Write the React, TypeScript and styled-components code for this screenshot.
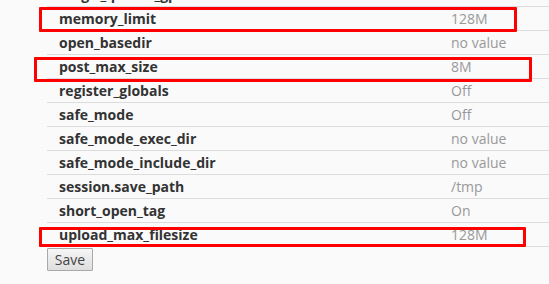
import React from "react";
import styled, { createGlobalStyle } from "styled-components";

const GlobalStyle = createGlobalStyle`
  html, body {
    margin: 0;
    padding: 0;
    background: #fafafa;
  }
  body {
    font-family: "Open Sans", "DejaVu Sans", sans-serif;
    font-size: 14px;
  }
`;

interface Setting {
  name: string;
  value: string;
}

const settings: Setting[] = [
  { name: "magic_quotes_gpc", value: "Off" },
  { name: "memory_limit", value: "128M" },
  { name: "open_basedir", value: "no value" },
  { name: "post_max_size", value: "8M" },
  { name: "register_globals", value: "Off" },
  { name: "safe_mode", value: "Off" },
  { name: "safe_mode_exec_dir", value: "no value" },
  { name: "safe_mode_include_dir", value: "no value" },
  { name: "session.save_path", value: "/tmp" },
  { name: "short_open_tag", value: "On" },
  { name: "upload_max_filesize", value: "128M" },
];

// red annotation boxes drawn over the screenshot
const marks = [
  { left: 39, top: 7, width: 478, height: 25 },
  { left: 34, top: 57, width: 498, height: 25 },
  { left: 39, top: 227, width: 487, height: 20 },
];

function App() {
  return (
    <Page>
      <GlobalStyle />
      <Settings>
        {settings.map((s) => (
          <Row key={s.name}>
            <Name>{s.name}</Name>
            <Value>{s.value}</Value>
          </Row>
        ))}
      </Settings>
      <SaveButton type="button">Save</SaveButton>
      {marks.map((m, i) => (
        <Mark key={i} style={m} />
      ))}
    </Page>
  );
}

const Page = styled.div`
  position: relative;
  width: 549px;
  height: 284px;
  overflow: hidden;
  padding-left: 47px;
  box-sizing: border-box;
`;

const Settings = styled.div`
  width: 560px;
  margin-top: -18px;
  border-bottom: 1px solid #dcdcdc;
`;

const Row = styled.div`
  display: grid;
  grid-template-columns: 392px 1fr;
  align-items: center;
  height: 24px;
  box-sizing: border-box;
  border-top: 1px solid #dcdcdc;
  padding-left: 12px;
  line-height: 23px;
`;

const Name = styled.span`
  color: #333;
  font-weight: 700;
  white-space: nowrap;
`;

const Value = styled.span`
  color: #999;
  white-space: nowrap;
`;

const SaveButton = styled.button`
  display: block;
  margin-top: 1px;
  width: 46px;
  height: 23px;
  padding: 0;
  font-family: "Open Sans", sans-serif;
  font-size: 14px;
  color: #444;
  background: linear-gradient(#f6f6f6, #dedede);
  border: 1px solid #a9a9a9;
  border-radius: 1px;
`;

const Mark = styled.div`
  position: absolute;
  box-sizing: border-box;
  border: 3px solid #ff0000;
  border-radius: 1px;
  pointer-events: none;
`;

export default App;
